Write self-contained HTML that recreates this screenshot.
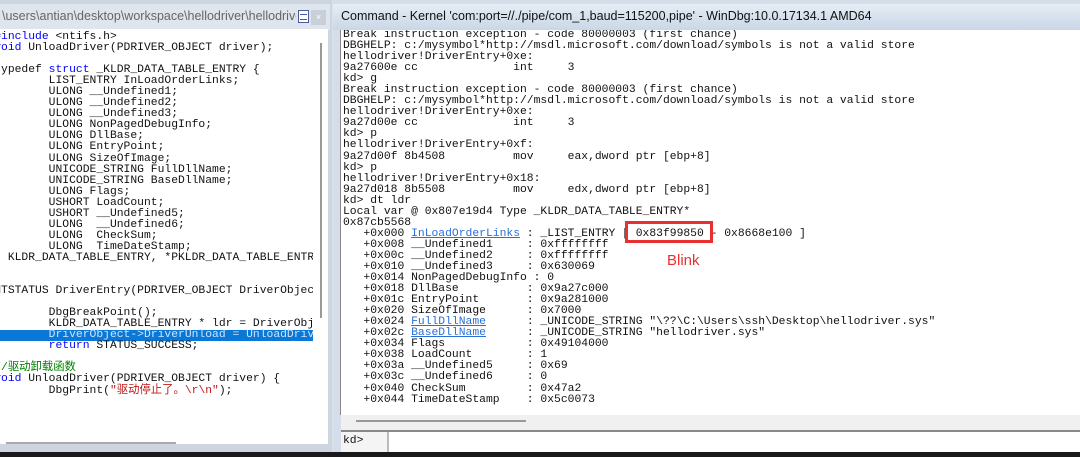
<!DOCTYPE html>
<html><head><meta charset="utf-8"><style>
*{margin:0;padding:0;box-sizing:border-box}
body{width:1080px;height:457px;overflow:hidden;background:#d9e1ea;position:relative;font-family:"Liberation Mono","Noto Sans CJK SC",monospace}
.abs{position:absolute}
pre{font-family:"Liberation Mono","Noto Sans CJK SC",monospace;font-size:11.35px;line-height:11.05px;color:#111;white-space:pre}
.k{color:#0000ff}.c{color:#008000}.s{color:#c01818}
a{color:#2a6fd8;text-decoration:underline}
</style></head><body>
<!-- left panel -->
<div class="abs" style="left:0;top:0;width:332px;height:457px;background:#cdd6e0"></div>
<div class="abs" style="left:0;top:4px;width:330px;height:26px;background:#dfe5ec"></div>
<div class="abs" style="left:2px;top:9px;font-family:'Liberation Sans',sans-serif;font-size:12.5px;color:#666;white-space:nowrap;width:294px;overflow:hidden">\users\antian\desktop\workspace\hellodriver\hellodriver\hello</div>
<div class="abs" style="left:298px;top:10px;width:11px;height:13px;background:#fff;border:1px solid #4a5a9a"><div style="margin:3px 1px;height:6px;border-top:1px solid #4a5a9a;border-bottom:1px solid #4a5a9a"></div></div>
<div class="abs" style="left:311px;top:10px;width:15px;height:15px;background:#c9cfd8;color:#fff;font:9px 'Liberation Sans';text-align:center;line-height:15px">×</div>
<div class="abs" style="left:0;top:29px;width:328px;height:415px;background:#fff;overflow:hidden">
<pre class="abs" style="left:-5.8px;top:3px"><span class="k">#include</span> &lt;ntifs.h&gt;
<span class="k">void</span> UnloadDriver(PDRIVER_OBJECT driver);

typedef <span class="k">struct</span> _KLDR_DATA_TABLE_ENTRY {
	LIST_ENTRY InLoadOrderLinks;
	ULONG __Undefined1;
	ULONG __Undefined2;
	ULONG __Undefined3;
	ULONG NonPagedDebugInfo;
	ULONG DllBase;
	ULONG EntryPoint;
	ULONG SizeOfImage;
	UNICODE_STRING FullDllName;
	UNICODE_STRING BaseDllName;
	ULONG Flags;
	USHORT LoadCount;
	USHORT __Undefined5;
	ULONG  __Undefined6;
	ULONG  CheckSum;
	ULONG  TimeDateStamp;
} KLDR_DATA_TABLE_ENTRY, *PKLDR_DATA_TABLE_ENTRY;


NTSTATUS DriverEntry(PDRIVER_OBJECT DriverObject, PUNICODE_STRING reg) {

	DbgBreakPoint();
	KLDR_DATA_TABLE_ENTRY * ldr = DriverObject->DriverSection;
<span style="background:#0a78d7;color:#cfe3ff;display:inline-block;width:330px">	DriverObject-&gt;DriverUnload = UnloadDriver;</span>
	<span class="k">return</span> STATUS_SUCCESS;

<span class="c">//驱动卸载函数</span>
<span class="k">void</span> UnloadDriver(PDRIVER_OBJECT driver) {
	DbgPrint(<span class="s">"驱动停止了。\r\n"</span>);</pre>
<div class="abs" style="left:313px;top:0;width:15px;height:415px;background:#fff"></div>
<div class="abs" style="left:320px;top:14px;width:2px;height:275px;background:#999"></div>
<div class="abs" style="left:6px;top:413px;width:170px;height:2px;background:#aaa"></div>
</div>
<!-- right panel -->
<div class="abs" style="left:333px;top:0;width:747px;height:457px;background:#d4dde8"></div>
<div class="abs" style="left:333px;top:4px;width:747px;height:26px;background:linear-gradient(#e6edf5,#c9d7e6)"></div>
<div class="abs" style="left:341px;top:9px;font-family:'Liberation Sans',sans-serif;font-size:12.5px;color:#111;white-space:nowrap">Command - Kernel 'com:port=//./pipe/com_1,baud=115200,pipe' - WinDbg:10.0.17134.1 AMD64</div>
<div class="abs" style="left:340px;top:30px;width:740px;height:385px;background:#fff;border-left:1px solid #888;overflow:hidden">
<pre class="abs" style="left:2px;top:0px">Break instruction exception - code 80000003 (first chance)
DBGHELP: c:/mysymbol*http://msdl.microsoft.com/download/symbols is not a valid store
hellodriver!DriverEntry+0xe:
9a27600e cc              int     3
kd&gt; g
Break instruction exception - code 80000003 (first chance)
DBGHELP: c:/mysymbol*http://msdl.microsoft.com/download/symbols is not a valid store
hellodriver!DriverEntry+0xe:
9a27d00e cc              int     3
kd&gt; p
hellodriver!DriverEntry+0xf:
9a27d00f 8b4508          mov     eax,dword ptr [ebp+8]
kd&gt; p
hellodriver!DriverEntry+0x18:
9a27d018 8b5508          mov     edx,dword ptr [ebp+8]
kd&gt; dt ldr
Local var @ 0x807e19d4 Type _KLDR_DATA_TABLE_ENTRY*
0x87cb5568
   +0x000 <a>InLoadOrderLinks</a> : _LIST_ENTRY [ 0x83f99850 - 0x8668e100 ]
   +0x008 __Undefined1     : 0xffffffff
   +0x00c __Undefined2     : 0xffffffff
   +0x010 __Undefined3     : 0x630069
   +0x014 NonPagedDebugInfo : 0
   +0x018 DllBase          : 0x9a27c000
   +0x01c EntryPoint       : 0x9a281000
   +0x020 SizeOfImage      : 0x7000
   +0x024 <a>FullDllName</a>      : _UNICODE_STRING "\??\C:\Users\ssh\Desktop\hellodriver.sys"
   +0x02c <a>BaseDllName</a>      : _UNICODE_STRING "hellodriver.sys"
   +0x034 Flags            : 0x49104000
   +0x038 LoadCount        : 1
   +0x03a __Undefined5     : 0x69
   +0x03c __Undefined6     : 0
   +0x040 CheckSum         : 0x47a2
   +0x044 TimeDateStamp    : 0x5c0073</pre>
</div>
<div class="abs" style="left:625px;top:221px;width:88px;height:22px;border:3px solid #e83030"></div>
<div class="abs" style="left:667px;top:252px;font-family:'Liberation Sans',sans-serif;font-size:15px;color:#e83030">Blink</div>
<div class="abs" style="left:341px;top:415px;width:739px;height:15px;background:#f0f0f0"></div>
<div class="abs" style="left:356px;top:420px;width:170px;height:2px;background:#999"></div>
<div class="abs" style="left:341px;top:430px;width:739px;height:2px;background:#888"></div>
<div class="abs" style="left:341px;top:432px;width:739px;height:20px;background:#fff"></div>
<div class="abs" style="left:341px;top:432px;width:48px;height:20px;background:#f4f4f4;border-right:2px solid #bbb;font-size:11.35px;padding:3px 2px;color:#111">kd&gt;</div>
<div class="abs" style="left:0;top:452px;width:1080px;height:5px;background:#1a1a1a"></div>
</body></html>
